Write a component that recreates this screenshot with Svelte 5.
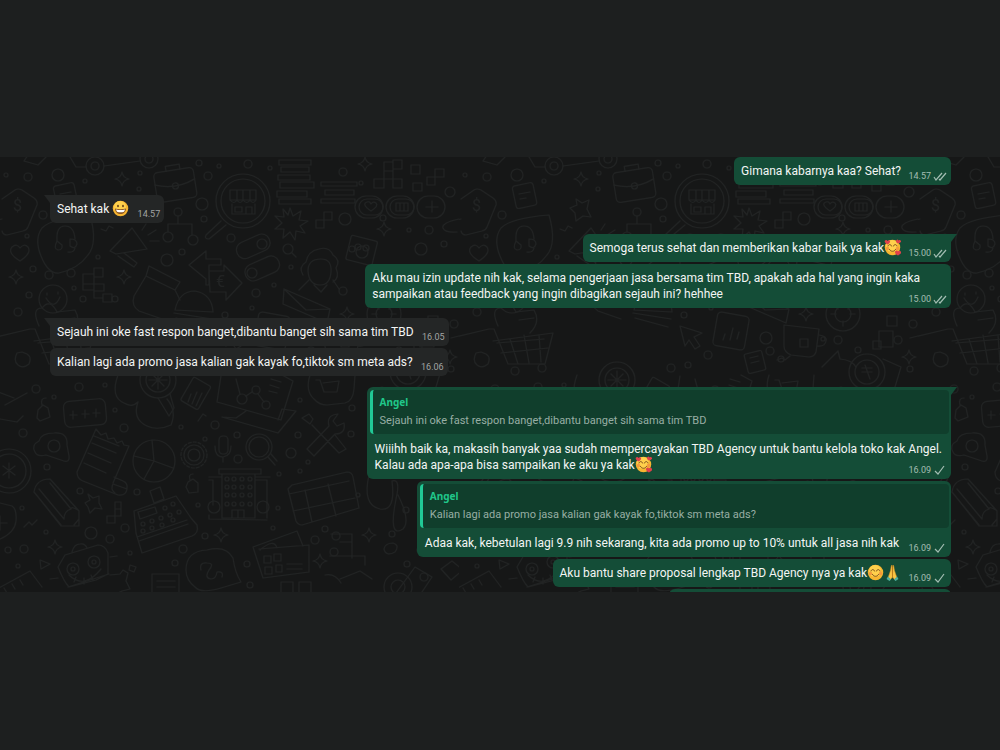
<script>
  const messages = [
    { id: 1, side: 'out', text: 'Gimana kabarnya kaa? Sehat?', time: '14.57', read: true },
    { id: 2, side: 'in', tail: true, text: 'Sehat kak 😀', time: '14.57' },
    { id: 3, side: 'out', tail: true, text: 'Semoga terus sehat dan memberikan kabar baik ya kak🥰', time: '15.00', read: true },
    {
      id: 4,
      side: 'out',
      text: 'Aku mau izin update nih kak, selama pengerjaan jasa bersama tim TBD, apakah ada hal yang ingin kaka sampaikan atau feedback yang ingin dibagikan sejauh ini? hehhee',
      time: '15.00',
      read: true,
    },
    { id: 5, side: 'in', tail: true, text: 'Sejauh ini oke fast respon banget,dibantu banget sih sama tim TBD', time: '16.05' },
    { id: 6, side: 'in', text: 'Kalian lagi ada promo jasa kalian gak kayak fo,tiktok sm meta ads?', time: '16.06' },
    {
      id: 7,
      side: 'out',
      tail: true,
      quote: { name: 'Angel', text: 'Sejauh ini oke fast respon banget,dibantu banget sih sama tim TBD' },
      text: 'Wiiihh baik ka, makasih banyak yaa sudah mempercayakan TBD Agency untuk bantu kelola toko kak Angel.\nKalau ada apa-apa bisa sampaikan ke aku ya kak🥰',
      time: '16.09',
    },
    {
      id: 8,
      side: 'out',
      quote: { name: 'Angel', text: 'Kalian lagi ada promo jasa kalian gak kayak fo,tiktok sm meta ads?' },
      text: 'Adaa kak, kebetulan lagi 9.9 nih sekarang, kita ada promo up to 10% untuk all jasa nih kak',
      time: '16.09',
    },
    { id: 9, side: 'out', text: 'Aku bantu share proposal lengkap TBD Agency nya ya kak😊🙏', time: '16.09' },
  ];

  const emojiPattern = /(😀|🥰|😊|🙏)/u;

  // wallpaper confetti: x, y, radius
  const dots = [
    [6, 18, 2], [28, 20, 4], [58, 18, 6], [85, 24, 2], [140, 16, 2], [139, 32, 2], [199, 6, 3], [219, 9, 2], [248, 7, 4],
    [270, 11, 2], [208, 19, 4], [202, 47, 6], [43, 58, 4], [204, 62, 3], [27, 79, 2], [231, 81, 4], [182, 95, 3], [167, 103, 6],
    [98, 100, 2], [33, 112, 3], [49, 118, 4], [71, 116, 4], [74, 131, 2], [29, 138, 3], [83, 142, 3], [115, 142, 3], [18, 155, 4],
    [274, 128, 2], [256, 136, 4], [252, 151, 2], [225, 158, 3], [291, 110, 2], [343, 15, 4], [361, 26, 2], [345, 62, 6],
    [409, 73, 2], [429, 73, 4], [444, 87, 3], [421, 92, 6], [352, 92, 3], [383, 61, 3], [343, 134, 4], [450, 35, 5], [454, 167, 4],
    [322, 202, 3], [307, 181, 6], [311, 194, 4], [249, 198, 4], [229, 208, 3], [212, 211, 4], [364, 182, 2], [379, 183, 4],
    [399, 193, 3], [439, 183, 4], [451, 212, 3], [36, 232, 4], [79, 230, 4], [105, 228, 2], [54, 240, 2], [115, 253, 2],
    [124, 271, 4], [23, 276, 4], [181, 270, 2], [215, 268, 4], [300, 243, 2], [237, 278, 3], [205, 282, 2], [298, 278, 3],
    [291, 296, 5], [47, 310, 3], [238, 302, 4], [279, 317, 2], [300, 314, 2], [308, 305, 2], [137, 335, 3], [80, 334, 3], [22, 351, 2],
    [198, 348, 2], [278, 351, 2], [46, 375, 2], [91, 376, 6], [125, 371, 4], [110, 382, 4], [205, 379, 3], [273, 371, 2],
    [183, 392, 4], [24, 392, 4], [8, 393, 3], [130, 396, 2], [18, 409, 2], [175, 406, 3], [247, 407, 3], [250, 428, 3], [325, 372, 3],
    [315, 383, 4], [334, 395, 4], [358, 338, 2], [406, 353, 3], [336, 379, 4], [351, 277, 3], [352, 251, 3], [407, 407, 3],
    [419, 393, 2], [424, 420, 4], [440, 376, 3], [392, 377, 3], [400, 286, 4], [433, 256, 3], [443, 310, 4], [382, 232, 2],
  ];

  const stars = [
    [122, 22], [16, 120], [124, 120], [365, 7], [384, 72], [221, 378], [55, 390], [320, 404], [369, 378], [347, 157], [450, 200], [420, 242],
  ];

  const tillKeys = [
    [143, 367], [152, 364], [161, 361], [170, 358], [143, 374], [152, 371], [162, 368], [173, 363], [165, 351], [173, 347], [179, 355],
  ];

  function pieces(text) {
    return text.split(emojiPattern).filter(Boolean);
  }
</script>

{#snippet emoji(char)}
  <svg class="emoji" viewBox="0 0 34 34" role="img" aria-label={char}>
    {#if char === '🙏'}
      <path d="M16 2c-2 1-2 6-3 11l-3 9-2 5 5 4 4-5zM18 2c2 1 2 6 3 11l3 9 2 5-5 4-4-5z" fill="#f8c544" stroke="#cf8d20" stroke-width="1" />
      <path d="M17 5v21" stroke="#b87518" stroke-width="1.5" />
      <path d="M8 25l6 6-3 3-6-4zM26 25l-6 6 3 3 6-4z" fill="#4fb0a0" />
    {:else}
      <circle cx="17" cy="17" r="15.5" fill="#f7b531" />
      <circle cx="16" cy="14" r="12" fill="#ffd04c" />
      {#if char === '😀'}
        <ellipse cx="12" cy="12" rx="1.7" ry="2.6" fill="#5b3714" />
        <ellipse cx="22" cy="12" rx="1.7" ry="2.6" fill="#5b3714" />
        <path d="M6 17q11 3 22 0c0 7-5 11-11 11S6 24 6 17z" fill="#8a5522" />
        <path d="M8 19q9 2 18 0q-1 4-3 5q-6 1-12 0q-2-1-3-5z" fill="#fff" />
      {:else}
        <path d="M8 14c1-4 6-4 7 0M19 14c1-4 6-4 7 0" fill="none" stroke="#7a4c1a" stroke-width="2" stroke-linecap="round" />
        <path d="M11 21c2 5 10 5 12 0" fill="none" stroke="#7a4c1a" stroke-width="2" stroke-linecap="round" />
        <circle cx="7" cy="19" r="3.5" fill="#f39a3c" />
        <circle cx="27" cy="19" r="3.5" fill="#f39a3c" />
        {#if char === '🥰'}
          <g fill="#e0414b">
            <path d="M7 11C2 8 0 5 2 3s4-1 5 1c1-2 4-2 5 0s-1 5-5 7z" />
            <path d="M28 9c-4-2-5-5-3-7s3-1 4 1c1-2 4-1 5 1s-2 4-6 5z" />
            <path d="M28 33c-6-3-7-7-5-9s4-1 5 1c1-2 5-2 6 1s-2 5-6 7z" />
          </g>
        {/if}
      {/if}
    {/if}
  </svg>
{/snippet}

<div class="page">
  <main class="chat">
    <svg class="wallpaper" aria-hidden="true">
      <defs>
        <path id="spark" d="M0-7Q1-1 7 0Q1 1 0 7Q-1 1-7 0Q-1-1 0-7z" />
        <pattern id="doodles" width="459" height="436" patternUnits="userSpaceOnUse">
          <g class="doodle">
            {#each dots as [x, y, r]}
              <circle cx={x} cy={y} {r} />
            {/each}
            {#each stars as [x, y]}
              <use href="#spark" {x} {y} />
            {/each}

            <!-- scooter, briefcase, lens with shop -->
            <circle cx="95" cy="9" r="9" /><circle cx="95" cy="9" r="4" />
            <circle cx="149" cy="2" r="9" /><circle cx="149" cy="2" r="4" />
            <path d="M70 0l6 10h10M104 9l36-5M24 4l14 4 8-8M24 4l4-6" />
            <g transform="rotate(-9 175 26)">
              <rect x="155" y="13" width="40" height="30" rx="4" />
              <path d="M155 25q20 8 40 0M168 13v-5h14v5" /><circle cx="175" cy="29" r="3" />
            </g>
            <circle cx="243" cy="44" r="27" /><circle cx="243" cy="44" r="22" />
            <path d="M221 64l-15 14q-2 4 3 4l17-14" />
            <path d="M230 33h26v10h-26zM230 43q4 5 7 0q3 5 6 0q4 5 7 0q3 5 6 0M237 33v10M243 33v10M250 33v10M232 47v10h23V47M246 57v-7h6v7M235 50h7v5h-7z" />

            <!-- price tag -->
            <path d="M2 42l13-9q3-2 7 0l12 8q4 3 3 7l-9 22q-1 3-5 4l-16 4q-4 0-5-4M-2 75q-14 0-12-5t16-8" />
            <text x="13" y="54">$</text>
            <path d="M461 42l13-9M457 75q-12 1-14-4t16-9" />

            <!-- books and blocks -->
            <path d="M279 3h32v5h-32zM281 10h28v5h-28zM278 18h32v5h-32zM280 25h34v6h-34zM277 34h30v6h-30zM279 42h32v5h-32z" />
            <path d="M321 25h36v4h-36zM325 33h29v5h-29zM321 42h34v4h-34z" />
            <path d="M290 51l3 8 8-5-2 9 9 1-8 5 5 7-9-2-1 9-5-8-7 6 1-9-9 0 7-6-7-7 9 1-1-8 5 6z" />
            <path d="M324 55h8v8h-8zM316 63h8v8h-8zM324 63v8h-8" />
            <path d="M384 5h9v9h-9zM384 14h9v8h-9zM393 3h9v9h-9zM374 22h10v9h-10zM393 22h9v9h-9zM411 8h9v9h-9zM413 26h9v8h-9zM435 12h9v8h-9zM427 20h8v8h-8z" />
            <rect x="355" y="39" width="28" height="22" rx="11" /><rect x="359" y="42" width="24" height="16" rx="8" />
            <rect x="386" y="39" width="28" height="22" rx="11" /><rect x="390" y="42" width="24" height="16" rx="8" />
            <rect x="417" y="39" width="28" height="22" rx="11" />
            <path d="M371 54q-10-7-4-9q3-1 4 2q2-3 5-1q3 3-5 8zM396 46h12v8h-12zM400 46v8M404 46v8M432 44v11M426 50h12" />

            <!-- small document, medal -->
            <rect x="55" y="27" width="21" height="23" rx="3" transform="rotate(-12 66 38)" />
            <path d="M60 37l11-2M61 42l6-1M117 42l6 4 7-3-2 9 4 8-8-1-7 5-1-8-5-5 7-3z" />

            <!-- headset, heart, megaphone, nodes -->
            <path d="M90 58q8 28-2 40q-10 14-29 18q-11 1-18-17q-7-17 1-28q10-10 48-13z" />
            <path d="M57 84q-1-15 8-15q9 0 10 13M57 84q-4 8 1 9q5 0 4-5zM70 82q7 0 7 5q-2 6-7 2zM75 91q-1 5-7 4" />
            <path d="M20 104q-13-8-8-14q5-4 8 1q4-5 8-1q4 6-8 14z" />
            <path d="M110 94l22-23 15 21-31 5zM118 99l16 11 3-4-13-10M142 73l4-6M148 78l8-5M150 84h9M101 72l5 2 3-5 4 2" />
            <circle cx="178" cy="55" r="4" /><circle cx="168" cy="80" r="5" /><circle cx="193" cy="83" r="5" />
            <path d="M178 59v8M168 75v-8h24v11" />

            <!-- switches, magnifier, customer -->
            <rect x="236" y="81" width="35" height="17" rx="8" transform="rotate(-24 253 90)" /><circle cx="262" cy="87" r="5" />
            <rect x="244" y="103" width="36" height="17" rx="8" transform="rotate(-24 262 111)" /><circle cx="252" cy="116" r="5" />
            <circle cx="288" cy="92" r="5" /><path d="M292 96l4 4" />
            <path d="M303 118q-5-8 3-13q2-11 13-13q10-3 14 6q8 5 3 13q4 10-3 14M308 114q0-12 13-12q11 0 10 13q-1 13-11 13q-11 0-12-14zM299 133l10-10M333 123l6 9M314 128l7 7 6-7" />
            <path d="M284 132l46 20-3 14-44-19zM284 132l22 21 24-1" />

            <!-- arrows, bag, burger, squares -->
            <path d="M189 108l17-14v8h15v6h-12v20h-3v-6zM209 114h15v-6l18 18-16 17v-8h-16z" />
            <text x="216" y="130">€</text>
            <path d="M149 109l31 16-5 8-29-14zM146 119l-12 20q-3 10 5 15l23 8M175 133l5 10" />
            <path d="M175 153q4-19 20-19q17 3 18 21zM174 156l38 6M176 161l33 9" />
            <path d="M83 117h11v10h-11zM94 111h9v9h-9zM83 127v6h11v-6zM94 127h10v7h-10zM103 137h9v8h-9zM94 134v7h9" />
            <circle cx="53" cy="142" r="14" /><path d="M46 141q8 13 14-1M47 136v2M58 135v2" />

            <!-- picture and gear -->
            <rect x="348" y="81" width="27" height="25" rx="2" transform="rotate(14 362 94)" />
            <circle cx="362" cy="95" r="6" /><circle cx="358" cy="90" r="3" /><circle cx="366" cy="91" r="3" />
            <circle cx="384" cy="157" r="17" /><circle cx="384" cy="157" r="8" />
            <path d="M384 145v5M384 164v5M372 157h5M391 157h5M376 149l3 3M392 149l-3 3" />

            <!-- trolley with groceries -->
            <path d="M-8 181l38-9h5l14 35h37l8-31-60 8M38 186l47-4M42 196l47-5M51 182l8 25M65 178l5 28M80 178l2 27M39 169q-8-18 3-18q8-10 15 4l18-2q7 12-4 23M60 163l15-2" />
            <circle cx="56" cy="214" r="4" /><circle cx="83" cy="211" r="4" />
            <path d="M451 181l8-2M17 196q-4 8 1 12q5 4 11-1q3-7-2-10l-5-2z" />

            <!-- cursor, chart card, cup, note -->
            <path d="M221 169l22 7-8 4 6 9-5 3-6-9-4 6z" />
            <rect x="256" y="157" width="32" height="34" rx="4" transform="rotate(10 272 174)" /><path d="M264 183l2-6M271 183l3-12M278 182l2-7" />
            <path d="M325 168l35 4-3 23q-2 5-7 5l-18-2q-7-3-7-9zM360 178q8 1 7 6q-1 6-9 5M341 182h8v8h-8z" />
            <rect x="287" y="195" width="18" height="20" rx="2" transform="rotate(-14 296 205)" />
            <path d="M291 201l8-2M292 206l8-2M318 203l5-2 3 2 5-4" />
            <path d="M428 159h10v10h-10zM420 174h14v16h-14zM414 184h8v8h-8z" />
            <path d="M363 210l16-16 2 8q12 1 16 8M424 202l18 8-6 20" />
            <circle cx="408" cy="215" r="18" /><circle cx="408" cy="215" r="12" /><path d="M403 211h10M403 215h10M406 208l5 14" />

            <!-- password card, bird, gear lens -->
            <rect x="64" y="243" width="42" height="26" rx="6" transform="rotate(-5 85 256)" />
            <path d="M70 258h7M73 254v8M82 257h7M85 253v8M93 256h7M96 252v8M38 253l5-5 5 3 2 9-10 4-3-3zM42 248q-2-7 4-7" />
            <path d="M-4 234l18 7M5 248l22-12M0 262l17 3 6-6" />
            <path d="M118 218q-8 22 6 28q8 5 14-1q-6 17 9 24q11 5 24-1q6-14-4-26" />
            <circle cx="158" cy="223" r="18" /><circle cx="158" cy="223" r="12" />
            <path d="M158 214v18M149 223h18M152 217l12 12M164 217l-12 12M158 241l11 18 5-8-4-14" />
            <rect x="186" y="223" width="20" height="27" rx="2" transform="rotate(30 196 236)" />
            <path d="M188 245l3-8M192 247l5-12M196 249l6-13M198 264l5-7 3 2" />

            <!-- laptop with graph -->
            <path d="M221 219l-4 26 64 18 12-39-11-6M222 260l56 16 18-22-14-2-4 11M222 260l14 1 10-7M271 222l10 3M270 228l9 3M269 234l8 2" />
            <circle cx="242" cy="242" r="5" /><circle cx="256" cy="233" r="4" /><circle cx="266" cy="248" r="4" /><path d="M246 239l6-4M258 237l6 8M240 237l-4-15" />
            <path d="M310 218q-5 16 4 24q5 6 13 6l18-2q8-2 9-14l1-14M316 223h4l4 12h13l2-11-16 2" />
            <path d="M307 292l22-23q-3-11 9-12l-5 7 4 5 7-3q2 11-9 11l-21 22zM302 261l7-4 4 5-3 5zM312 268l27 28 7-4-11-14" />

            <!-- egg, scroll, pie, cog, microphone, lens -->
            <path d="M35 295q-4-7 4-11q2-8 15-8q14-1 13 12l2 11q1 8-8 4q-9-3-15-5q-9 2-11-3z" /><circle cx="54" cy="289" r="6" />
            <path d="M96 272l-19 43q0 7 6 9l35 14q8 1 9-6l-14-5q-3 5 2 9M113 326l16-37-5-1-2-4-5 2-3-5-6 1-2-6-5 2-5-6M92 286l24 10M88 296l23 10M84 306l22 10M94 279l25 10M127 332q1-6-4-8l-9-4" />
            <circle cx="154" cy="304" r="21" /><path d="M152 283l2 21 19 7M154 304l-10 18M154 304l-20-5" />
            <circle cx="194" cy="298" r="10" /><circle cx="194" cy="298" r="13" stroke-dasharray="3 2" /><circle cx="194" cy="298" r="6" />
            <rect x="219" y="279" width="9" height="18" rx="4" /><path d="M215 289q0 11 8 11q8-1 8-11M223 300v5" />
            <circle cx="259" cy="290" r="13" /><circle cx="259" cy="290" r="10" /><path d="M268 300l7 8M271 297l6 7" />

            <!-- building -->
            <path d="M219 312h42v5h-42zM222 317v44h33v-44M209 320h13M209 323h4v25M267 323h-12M270 320h-15M267 323v38M209 358v4l58 1M232 361v-8h12v8M238 353v8" />
            {#each [322, 330, 338, 347] as y}
              {#each [227, 234, 242, 250] as x}
                <circle cx={x} cy={y} r="2" />
              {/each}
            {/each}
            <circle cx="214" cy="350" r="6" /><circle cx="263" cy="350" r="6" />

            <!-- coin, pencil, puzzle, till -->
            <circle cx="9" cy="314" r="22" /><circle cx="9" cy="314" r="17" /><path d="M9 306v15M3 309l12 9M15 309l-12 9" />
            <path d="M34 335q2-13 16-13l29 32v15h-18zM39 332l25 30M50 326l21 26M34 335l27 33M64 362q0-8 7-10q0-3 7 1M79 362l-5 6" />
            <path d="M88 337l5 4 6-2v7l3 6-7-1-5 5-2-6-3-4 5-3zM115 345h6v7h-6zM115 352h6v7h-6zM107 359h8v7h-8zM24 370l5-5 3 3 5-5" />
            <path d="M134 354l42-15 15 22 6 7q2 8-5 11l-50 17q-3-10-6-20zM137 380l50-17M139 384l49-17M138 355l17-5 2 6-17 6zM150 334l10-4 4 12-10 4z" />
            {#each tillKeys as [x, y]}
              <circle cx={x} cy={y} r="2" />
            {/each}
            <path d="M188 325l5-3 5 4v9l-9 1-3-6zM190 323q-2-6 3-6" />

            <!-- calendar, shield, cable -->
            <path d="M292 328l55-13q5 0 6 5l6 31-57 17q-4 0-6-4l-8-32zM289 337l60-13M293 354l62-13M305 333l7 32M328 327l8 32" />
            <path d="M-4 345l16 4q5 3 4 15t-18 19M0 359v14M-5 366h12" />
            <path d="M369 318q-7 30 11 34q16 3 12-28q9-3 4 18q-8 40 7 30q8-8-5-34" />
            <path d="M331 377h21v24M340 385h12M330 399h35v9M393 386q-8 0-9 6q2 8 11 3q5-7-2-9z" />

            <!-- robot, help bubble, coupons, film -->
            <path d="M58 410l7-12 33-10q7 0 10 8v21l-12 6-27 7q-5-5-11-20zM72 395q2-8 8-8q5-1 7 4M68 430l41-13M110 400l7-1M50 422l8-1" />
            <circle cx="73" cy="412" r="6" /><circle cx="94" cy="405" r="6" /><circle cx="73" cy="412" r="2" /><circle cx="94" cy="405" r="2" />
            <path d="M69 418q15 15 32-6M74 425l2-5M84 427v-6M93 423l-2-5" />
            <path d="M186 413q0-19 21-20q19-5 26 8q2 15 8 24l-20 6q-20 6-26-1q-9-7-9-17zM201 413q-2-8 6-7q8 0 2 7q-5 8 2 9q5 0 6-7q7-1 5 5" />
            <path d="M253 390l44-16 6 15M253 390l10 31 46-6v-27l-50 4M264 399h7v7h-7zM274 397h7v7h-7zM265 410h7v7h-7zM276 408h6v7h-6zM287 407h15M287 412h15M260 393q14-12 17-2" />
            <path d="M-3 432l33-18 12 16M4 431l3 5M12 427l3 5M20 423l3 5M40 403l10 4-9 5zM110 418l10-1 3-4 5 3-2 8 4 8-8 2-8 4M130 408l6 2-2 5-5-2z" />
            <path d="M152 417h27v20h-27zM157 424h18M157 430h18M281 425h12v12h-12zM299 425h12v12h-12zM325 418q10-2 16 8" />
            <path d="M441 412l11-8 11 9-12 10zM372 422l-12-8-20 8M396 436l19-26 17 10-12 18" />
            <circle cx="398" cy="430" r="14" /><circle cx="398" cy="430" r="7" />
          </g>
        </pattern>
      </defs>
      <rect width="100%" height="100%" fill="url(#doodles)" />
    </svg>

    <div class="messages">
      {#each messages as message, i (message.id)}
        <article
          class="bubble {message.side}"
          class:tail={message.tail}
          class:first={i > 0 && messages[i - 1].side !== message.side}
        >
          {#if message.quote}
            <blockquote class="quote">
              <div class="quote-name">{message.quote.name}</div>
              <div class="quote-text">{message.quote.text}</div>
            </blockquote>
          {/if}
          <div class="text" class:after-quote={message.quote}
            >{#each pieces(message.text) as piece}{#if emojiPattern.test(piece)}{@render emoji(piece)}{:else}{piece}{/if}{/each}<span class="spacer"></span></div>
          <div class="meta">
            <time>{message.time}</time>
            {#if message.side === 'out'}
              <svg class="ticks" viewBox="0 0 14 10" role="img" aria-label={message.read ? 'Delivered' : 'Sent'}>
                {#if message.read}
                  <path d="M1 6l2 3 6-7M6 8l1 1 6-7" />
                {:else}
                  <path d="M2 6l3 3 6-8" />
                {/if}
              </svg>
            {/if}
          </div>
        </article>
      {/each}
      <article class="bubble out upcoming" aria-hidden="true"></article>
    </div>
  </main>
</div>

<style>
  :global(body) {
    background: #1d1f1f;
  }

  .page {
    display: grid;
    grid-template-rows: 157fr 435fr 158fr;
    height: 100vh;
    background: #1d1f1f;
    font-family: Roboto, "Open Sans", sans-serif;
  }

  .chat {
    grid-row: 2;
    position: relative;
    min-height: 0;
    overflow: hidden;
    background: #161717;
  }

  .wallpaper {
    position: absolute;
    inset: 0;
    width: 100%;
    height: 100%;
  }

  .doodle {
    fill: none;
    stroke: #212323;
    stroke-width: 1.2;
    stroke-linejoin: round;
    stroke-linecap: round;
  }

  .doodle text {
    font-size: 16px;
    fill: #212323;
    stroke: none;
  }

  .messages {
    position: relative;
    display: flex;
    flex-direction: column;
    gap: 2px;
    padding: 0 49px 0 50px;
  }

  .bubble {
    position: relative;
    box-sizing: border-box;
    max-width: 65%;
    border-radius: 6px;
    color: #f3f5f4;
    font-size: 12px;
    line-height: 16px;
  }

  .bubble.out {
    align-self: flex-end;
    background: #144d37;
  }

  .bubble.in {
    align-self: flex-start;
    background: #242626;
  }

  .bubble.out.first {
    margin-top: 9px;
  }

  .bubble.in.first {
    margin-top: 8px;
  }

  .bubble.tail::after {
    content: "";
    position: absolute;
    top: 0;
    width: 12px;
    height: 8px;
    background: inherit;
  }

  .bubble.out.tail {
    border-top-right-radius: 0;
  }

  .bubble.out.tail::after {
    right: -6px;
    clip-path: polygon(0 0, 100% 0, 50% 100%, 0 100%);
  }

  .bubble.in.tail {
    border-top-left-radius: 0;
  }

  .bubble.in.tail::after {
    left: -6px;
    clip-path: polygon(0 0, 100% 0, 100% 100%, 50% 100%);
  }

  .text {
    padding: 6px 7px;
    white-space: pre-line;
  }

  .text.after-quote {
    padding: 7px 9px 6px 8px;
  }

  .spacer {
    display: inline-block;
    width: 28px;
  }

  .out .spacer {
    width: 43px;
  }

  .emoji {
    width: 17px;
    height: 17px;
    margin: -1px 0;
    vertical-align: top;
  }

  .meta {
    position: absolute;
    right: 4px;
    bottom: 3px;
    display: flex;
    align-items: center;
    gap: 2px;
    color: #a1a4a3;
    font-size: 9px;
    line-height: 12px;
  }

  .out .meta {
    color: #a3bdb2;
  }

  .ticks {
    width: 14px;
    height: 10px;
    fill: none;
    stroke: currentColor;
    stroke-width: 1.2;
  }

  .quote {
    position: relative;
    z-index: 1;
    box-sizing: border-box;
    height: 44px;
    margin: 3px 2px 0 3px;
    padding: 3px 7px;
    border-left: 3px solid #21c996;
    border-radius: 4px;
    background: #103e2c;
  }

  .quote-name {
    color: #20c78a;
    font-family: "Noto Sans", sans-serif;
    font-size: 10px;
    font-weight: 700;
    line-height: 18px;
  }

  .quote-text {
    color: #98aea4;
    font-size: 11px;
    line-height: 20px;
  }

  .upcoming {
    width: 282px;
    height: 28px;
  }
</style>
